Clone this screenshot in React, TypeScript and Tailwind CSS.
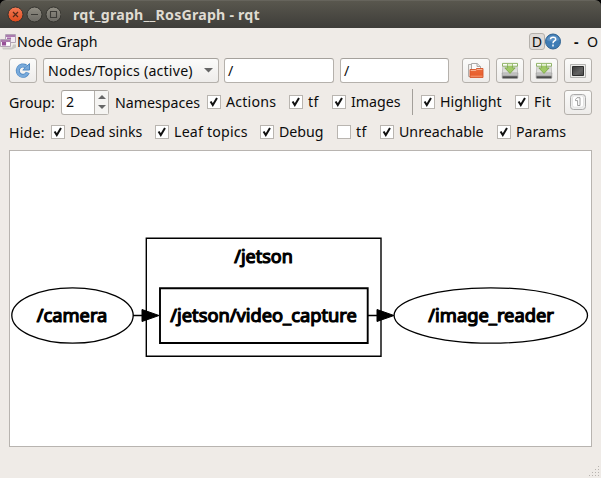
import React from "react";

const button =
  "flex h-[25px] w-[28px] shrink-0 items-center justify-center rounded-[3px] border border-[#b5b1ac] bg-gradient-to-b from-[#fbfbfa] to-[#eeecea]";
const field =
  "flex h-[25px] shrink-0 items-center rounded-[3px] border border-[#b5b1ac] border-t-[#a5a19c] bg-white";

function Check({ label, box, checked = true }: { label: string; box: string; checked?: boolean }) {
  return (
    <label className={`flex h-[18px] shrink-0 items-center whitespace-nowrap ${box}`}>
      <span className="mr-[5px] flex size-[14px] shrink-0 items-center justify-center border border-[#b9b5b0] bg-white">
        {checked && (
          <svg width="12" height="12" viewBox="0 0 12 12" fill="none">
            <path d="M2.6 5.4 4.8 9 9 2" stroke="#111" strokeWidth="2" />
          </svg>
        )}
      </span>
      <span>{label}</span>
    </label>
  );
}

function RefreshIcon() {
  return (
    <svg width="18" height="18" viewBox="0 0 18 18" fill="none">
      <path d="M12 4.4A5.2 5.2 0 1 0 13.8 10.6" stroke="#5089c2" strokeWidth="4" />
      <path d="M8.8 8h6.7V1.6Z" fill="#78aadb" stroke="#5089c2" strokeWidth="1" />
      <path d="M12.2 4.8A5.2 5.2 0 1 0 13.6 10.8" stroke="#78aadb" strokeWidth="2.6" />
    </svg>
  );
}

function FolderIcon() {
  return (
    <svg width="18" height="18" viewBox="0 0 18 18">
      <path d="M1.5 14.5v-12h4l1.5 2v10Z" fill="#f0efed" stroke="#b0aeac" />
      <path d="M4.5 13V1.5h5.7l3.3 3V13Z" fill="#fafafa" stroke="#aaa8a6" />
      <path d="M10 1.5v3h3.5" fill="#e4e4e4" stroke="#aaa8a6" />
      <path d="M3 7.5h5.5l1-1H16v9H3Z" fill="url(#folder)" stroke="#d4562b" strokeWidth=".9" />
      <path d="M3.7 8.5h5.2l1-1h5.5" fill="none" stroke="#f9b291" />
      <defs>
        <linearGradient id="folder" x1="0" y1="0" x2="0" y2="1">
          <stop stopColor="#e96b3c" />
          <stop offset=".7" stopColor="#e9602e" />
          <stop offset="1" stopColor="#f7a27d" />
        </linearGradient>
      </defs>
    </svg>
  );
}

function SaveIcon() {
  return (
    <svg width="18" height="18" viewBox="0 0 18 18">
      <path d="M2 2.5h14l.7 9H1.3Z" fill="#dededc" stroke="#b5b5b2" strokeWidth=".8" />
      <path d="M1.2 11h15.6v4.5q0 1-1 1H2.2q-1 0-1-1Z" fill="url(#drive)" stroke="#9a9a98" strokeWidth=".7" />
      <path d="M1.5 1.4h15v2.8h-15Z" fill="#fcfdf9" stroke="#86ae58" strokeWidth=".9" />
      <path d="M6.6 2v3.9H3.8L9 11.4l5.2-5.5h-2.8V2Z" fill="#a0c965" stroke="#79a546" strokeWidth=".8" />
      <path d="M6.8 1.8h4.4v2H6.8Z" fill="#e3efd2" />
      <defs>
        <linearGradient id="drive" x1="0" y1="0" x2="0" y2="1">
          <stop stopColor="#dcdcda" />
          <stop offset=".5" stopColor="#aaa" />
          <stop offset=".7" stopColor="#444" />
          <stop offset="1" stopColor="#555" />
        </linearGradient>
      </defs>
    </svg>
  );
}

function ScreenIcon() {
  return (
    <svg width="18" height="18" viewBox="0 0 18 18">
      <defs>
        <linearGradient id="screen" x1="0" y1="0" x2="1" y2="1">
          <stop stopColor="#383838" />
          <stop offset=".6" stopColor="#646464" />
          <stop offset="1" stopColor="#484848" />
        </linearGradient>
      </defs>
      <path d="M1.5 2.5h15v13h-15Z" fill="#ececea" stroke="#b3b3b1" />
      <path d="M3.5 4.5h11v9h-11Z" fill="url(#screen)" stroke="#2e2e2e" />
    </svg>
  );
}

function OneIcon() {
  return (
    <svg width="18" height="18" viewBox="0 0 18 18" stroke="#aaa">
      <rect x="1.5" y="1.5" width="15" height="15" rx="3" fill="#eeeeed" />
      <rect x="3.5" y="2.8" width="11" height="11.4" rx="2" fill="#fff" stroke="#e2e2e2" />
      <path d="M6.5 6.5 8 4.7h3v7.8H8.6V7.6H6.5Z" fill="#fff" stroke="#888" strokeWidth=".8" />
    </svg>
  );
}

function WindowsIcon() {
  return (
    <svg width="16" height="17" viewBox="0 0 16 17">
      <path d="M2 14.5h10l1-3h3v3l-4 2H3Z" fill="#c9c7c5" />
      <path d="M5.5 1.5h10v8h-10Z" fill="#f2eaf3" stroke="#b3a3b5" />
      <path d="M6 2h9v2H6Z" fill="#ab7bae" />
      <path d="M7 4.5h4v3.5H7Z" fill="#a768aa" />
      <path d="M.5 6.5h10v7H.5Z" fill="#f6eff7" stroke="#b3a3b5" />
      <path d="M1 7h9v2H1Z" fill="#ab7bae" />
      <path d="M2 9h4v3.5H2Z" fill="#985099" />
      <path d="M7 9.5h3V12H7Z" fill="#fff" />
    </svg>
  );
}

function WindowButtons() {
  return (
    <svg className="ml-[7px] mr-[12px] shrink-0" width="54" height="18" viewBox="0 0 54 18" fill="none">
      <defs>
        <linearGradient id="close" x1="0" y1="0" x2="0" y2="1">
          <stop stopColor="#f47b56" />
          <stop offset="1" stopColor="#df4a1c" />
        </linearGradient>
        <linearGradient id="grey" x1="0" y1="0" x2="0" y2="1">
          <stop stopColor="#918e84" />
          <stop offset="1" stopColor="#6b6963" />
        </linearGradient>
      </defs>
      <circle cx="8.5" cy="8.5" r="7.5" fill="url(#close)" stroke="#34332e" />
      <circle cx="27.5" cy="8.5" r="7.5" fill="url(#grey)" stroke="#34332e" />
      <circle cx="46.5" cy="8.5" r="7.5" fill="url(#grey)" stroke="#34332e" />
      <path d="m6 6 5 5m0-5-5 5" stroke="#542918" strokeWidth="1.2" />
      <path d="M24 8.5h7M43.5 5.5h6v6h-6Z" stroke="#3c3b37" strokeWidth="1.1" />
    </svg>
  );
}

function Graph() {
  return (
    <svg
      className="block"
      width="581"
      height="295"
      viewBox="10 151 581 295"
      fill="none"
      stroke="#000"
      strokeWidth="1.5"
    >
      <path d="M146.3 238.3H381v118H146.3Z" strokeWidth="1.4" />
      <path d="M160 288.2h207.7v54.8H160Z" strokeWidth="1.9" />
      <ellipse cx="72.5" cy="315.5" rx="60.7" ry="27.7" strokeWidth="1.3" />
      <ellipse cx="490.8" cy="315.5" rx="96.7" ry="27.7" strokeWidth="1.3" />
      <path d="M133 315.5h9M368 315.5h9" strokeWidth="1.3" />
      <path d="m142 309.5 17 6-17 6ZM377 309.5l17 6-17 6Z" fill="#000" strokeWidth="1" />
      <g
        fill="#000"
        strokeWidth="1.15"
        strokeLinejoin="round"
        fontSize="17.2"
        className="font-['Noto_Sans',sans-serif]"
        textAnchor="start"
      >
        <text x="36.8" y="322" textLength="70.5" lengthAdjust="spacingAndGlyphs">/camera</text>
        <text x="234.3" y="263" textLength="58.5" lengthAdjust="spacingAndGlyphs">/jetson</text>
        <text x="170.3" y="322" textLength="186.5" lengthAdjust="spacingAndGlyphs">/jetson/video_capture</text>
        <text x="428.3" y="322" textLength="125.5" lengthAdjust="spacingAndGlyphs">/image_reader</text>
      </g>
    </svg>
  );
}

export default function App() {
  return (
    <div className="flex h-[478px] w-[601px] flex-col overflow-hidden bg-black font-['Noto_Sans',sans-serif] text-[14.2px] leading-[18px] text-[#0c0c0c]">
      <header className="flex h-[28px] shrink-0 items-center rounded-t-[6px] border-t border-[#66645c] bg-gradient-to-b from-[#59574e] to-[#3e3d39]">
        <WindowButtons />
        <h1 className="whitespace-nowrap text-[14.2px] font-bold tracking-[0.2px] text-[#dfdbd2]">rqt_graph__RosGraph - rqt</h1>
      </header>
      <main className="flex grow flex-col bg-[#efebe7]">
        <div className="flex h-[30px] shrink-0 items-start pt-[5px]">
          <WindowsIcon />
          <span className="w-[513px] pl-px tracking-[-0.08px]">Node Graph</span>
          <span className="flex h-[17px] w-[16px] items-center justify-center rounded-[3px] border border-[#b5b1ac] bg-[#dfdbd8]">D</span>
          <svg width="16" height="17" viewBox="0 0 16 17">
            <circle cx="8" cy="8.5" r="7.5" fill="#3e7cb5" stroke="#316391" />
            <path d="M1.5 7a7 7 0 0 1 13 0Q8 10 1.5 7Z" fill="#5a90c4" />
            <path d="M5.5 6.2C5.6 3.8 10.7 3.5 10.7 6.2 10.7 8 8 8 8 10.2M8 11.5v2" fill="none" stroke="#fff" strokeWidth="1.5" />
          </svg>
          <span className="ml-[13px] w-[13px] font-bold">-</span>
          <span>O</span>
        </div>
        <div className="flex h-[25px] shrink-0 pl-[9px]">
          <button className={`${button} mr-[6px]`}><RefreshIcon /></button>
          <div className={`${field} mr-[5px] w-[176px] bg-gradient-to-b from-[#fbfbfa] to-[#eeecea] pl-[4px]`}>
            <span className="w-[156px] whitespace-nowrap tracking-[0.2px]">Nodes/Topics (active)</span>
            <svg width="9" height="5" viewBox="0 0 9 5"><path d="M0 0h9L4.5 4.5Z" fill="#666" /></svg>
          </div>
          <div className={`${field} mr-[6px] w-[110px] pl-[3px]`}>/</div>
          <div className={`${field} mr-[13px] w-[109px] pl-[3px]`}>/</div>
          <div className="flex gap-[6px]">
            <button className={button}><FolderIcon /></button>
            <button className={button}><SaveIcon /></button>
            <button className={button}><SaveIcon /></button>
            <button className={button}><ScreenIcon /></button>
          </div>
        </div>
        <div className="flex h-[38px] shrink-0 items-center pl-[9px]">
          <span className="w-[52px] pt-px">Group:</span>
          <div className={`${field} w-[48px]`}>
            <span className="w-[32px] pl-[4px]">2</span>
            <span className="flex h-full w-[14px] flex-col items-center justify-center gap-[6px] border-l border-[#b5b1ac] bg-[#f5f4f2]">
              <svg width="8" height="4" viewBox="0 0 8 4"><path d="M0 4h8L4 0Z" fill="#666" /></svg>
              <svg width="8" height="4" viewBox="0 0 8 4"><path d="M0 0h8L4 4Z" fill="#666" /></svg>
            </span>
          </div>
          <span className="ml-[6px] w-[92px] pt-px">Namespaces</span>
          <Check label="Actions" box="w-[82px] tracking-[0.2px]" />
          <Check label="tf" box="w-[43px] tracking-[0.4px]" />
          <Check label="Images" box="w-[80px]" />
          <span className="mr-[8px] h-[26px] w-px bg-[#a39f9a]" />
          <Check label="Highlight" box="w-[94px]" />
          <Check label="Fit" box="w-[49px] tracking-[0.4px]" />
          <button className={button}><OneIcon /></button>
        </div>
        <div className="flex h-[29px] shrink-0 items-start pl-[9px] pt-[2px]">
          <span className="w-[42px] pt-px tracking-[0.2px]">Hide:</span>
          <Check label="Dead sinks" box="w-[104px]" />
          <Check label="Leaf topics" box="w-[105px] tracking-[0.2px]" />
          <Check label="Debug" box="w-[77px]" />
          <Check label="tf" box="w-[43px] tracking-[0.4px]" checked={false} />
          <Check label="Unreachable" box="w-[117px]" />
          <Check label="Params" box="w-[80px]" />
        </div>
        <div className="ml-[9px] h-[297px] w-[583px] shrink-0 border border-[#b8b4b0] bg-white">
          <Graph />
        </div>
        <div className="flex grow items-end justify-end">
          <svg width="13" height="13" viewBox="0 0 13 13" fill="#b8b4b0">
            <path d="M10 1h1v1h-1ZM7 4h1v1H7ZM10 4h1v1h-1ZM4 7h1v1H4ZM7 7h1v1H7ZM10 7h1v1h-1ZM1 10h1v1H1ZM4 10h1v1H4ZM7 10h1v1H7ZM10 10h1v1h-1Z" />
          </svg>
        </div>
      </main>
    </div>
  );
}
